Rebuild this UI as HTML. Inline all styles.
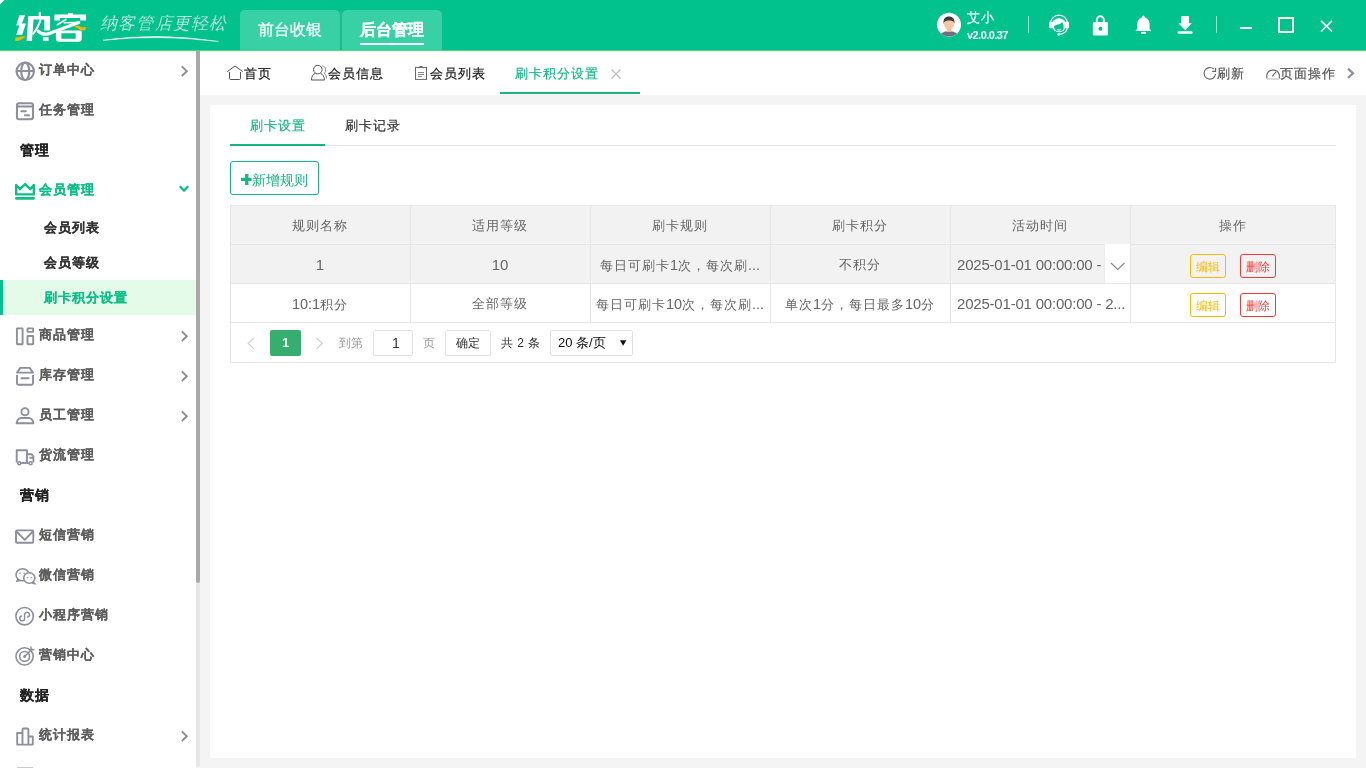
<!DOCTYPE html>
<html><head><meta charset="utf-8">
<style>
*{box-sizing:border-box;margin:0;padding:0}
.a,.mi,.sec,.sub,.tt,.th{will-change:transform}
html,body{width:1366px;height:768px;overflow:hidden;background:#f4f4f4;font-family:"Liberation Sans",sans-serif;font-size:14px;color:#333}
.a{position:absolute;white-space:nowrap}
.mi{position:absolute;left:39px;font-weight:bold;color:#5d5d5d;-webkit-text-stroke:0.1px currentColor;font-size:13px;letter-spacing:1px;line-height:20px;white-space:nowrap}
.sec{position:absolute;left:20px;font-weight:bold;color:#222;-webkit-text-stroke:0.1px currentColor;font-size:14px;letter-spacing:1px;line-height:20px}
.sub{position:absolute;left:44px;font-weight:bold;color:#333;-webkit-text-stroke:0.1px currentColor;font-size:13px;letter-spacing:1px;line-height:20px;white-space:nowrap}
.tt{position:absolute;font-size:13px;letter-spacing:1px;line-height:20px;color:#1a1a1a;-webkit-text-stroke:0.2px currentColor;white-space:nowrap}
.th{position:absolute;font-size:13px;letter-spacing:1px;line-height:20px;color:#666;white-space:nowrap;text-align:center}
.hl{position:absolute;background:#e6e6e6}
.d{font-style:normal;font-size:14.5px;letter-spacing:0}
</style></head><body>
<!-- header -->
<div class="a" style="left:0;top:0;width:1366px;height:50px;background:#01c28d"></div>
<div class="a" style="left:0;top:50px;width:1366px;height:1px;background:#47dc82"></div>
<div class="a" style="left:100px;top:11.5px;font-size:17px;line-height:24px;color:#fff;letter-spacing:1.2px;font-style:italic;-webkit-text-stroke:0.3px #01c28d">纳客管店更轻松</div>
<div class="a" style="left:240px;top:10px;width:100px;height:40px;background:#37d1a5;border-radius:5px 5px 0 0"></div>
<div class="a" style="left:342px;top:10px;width:100px;height:40px;background:#37d1a5;border-radius:5px 5px 0 0"></div>
<div class="a" style="left:340px;top:10px;width:2px;height:40px;background:#20b98a"></div>
<div class="a" style="left:258px;top:20px;font-size:16px;line-height:20px;color:#fff;-webkit-text-stroke:0.25px #fff">前台收银</div>
<div class="a" style="left:360px;top:20px;font-size:16px;line-height:20px;color:#fff;font-weight:bold;-webkit-text-stroke:0.2px #fff">后台管理</div>
<div class="a" style="left:360px;top:43px;width:64px;height:2px;background:#fff"></div>
<div class="a" style="left:967px;top:8px;font-size:13px;letter-spacing:1px;line-height:20px;color:#fff;-webkit-text-stroke:0.2px #fff">艾小</div>
<div class="a" style="left:967px;top:29px;font-size:11px;line-height:13px;color:#fff;font-weight:bold;letter-spacing:-0.55px">v2.0.0.37</div>
<div class="a" style="left:1028px;top:16px;width:1px;height:17px;background:#8fe6c8"></div>
<div class="a" style="left:1216px;top:16px;width:1px;height:17px;background:#8fe6c8"></div>

<!-- sidebar -->
<div class="a" style="left:0;top:51px;width:196px;height:717px;background:#fff"></div>
<div class="a" style="left:196px;top:51px;width:4px;height:716px;background:#e7e7e7;border-radius:0 0 2px 2px"></div>
<div class="a" style="left:196px;top:51px;width:4px;height:532px;background:#a9a9a9;border-radius:0 0 2px 2px"></div>
<div class="a" style="left:0;top:280px;width:196px;height:35px;background:#e4fbea"></div>
<div class="a" style="left:0;top:280px;width:3px;height:35px;background:#01c28d"></div>

<div class="mi" style="top:60px">订单中心</div>
<div class="mi" style="top:100px">任务管理</div>
<div class="sec" style="top:140px">管理</div>
<div class="mi" style="top:180px;color:#0bbf87">会员管理</div>
<div class="sub" style="top:218px">会员列表</div>
<div class="sub" style="top:253px">会员等级</div>
<div class="sub" style="top:288px;color:#0bbf87">刷卡积分设置</div>
<div class="mi" style="top:325px">商品管理</div>
<div class="mi" style="top:365px">库存管理</div>
<div class="mi" style="top:405px">员工管理</div>
<div class="mi" style="top:445px">货流管理</div>
<div class="sec" style="top:485px">营销</div>
<div class="mi" style="top:525px">短信营销</div>
<div class="mi" style="top:565px">微信营销</div>
<div class="mi" style="top:605px">小程序营销</div>
<div class="mi" style="top:645px">营销中心</div>
<div class="sec" style="top:685px">数据</div>
<div class="mi" style="top:725px">统计报表</div>

<!-- tab bar -->
<div class="a" style="left:200px;top:51px;width:1166px;height:44px;background:#fff"></div>
<div class="tt" style="left:244px;top:64px">首页</div>
<div class="tt" style="left:328px;top:64px">会员信息</div>
<div class="tt" style="left:430px;top:64px">会员列表</div>
<div class="tt" style="left:515px;top:64px;color:#12b985">刷卡积分设置</div>
<div class="a" style="left:500px;top:92px;width:140px;height:2px;background:#1cb47a"></div>
<div class="tt" style="left:1217px;top:64px;color:#555">刷新</div>
<div class="tt" style="left:1280px;top:64px;color:#555">页面操作</div>

<!-- card -->
<div class="a" style="left:210px;top:105px;width:1146px;height:653px;background:#fff"></div>
<div class="a" style="left:230px;top:145px;width:1106px;height:1px;background:#e6e6e6"></div>
<div class="a" style="left:230px;top:144px;width:95px;height:2px;background:#17b681"></div>
<div class="tt" style="left:250px;top:116px;color:#17b681">刷卡设置</div>
<div class="tt" style="left:345px;top:116px;color:#333">刷卡记录</div>
<div class="a" style="left:230px;top:161px;width:89px;height:34px;border:1px solid #17b681;border-radius:3px"></div>
<div class="a" style="left:252px;top:170px;font-size:14px;line-height:20px;color:#17b681">新增规则</div>

<!-- table -->
<div class="a" style="left:230px;top:205px;width:1106px;height:79px;background:#f2f2f2"></div>
<div class="hl" style="left:230px;top:205px;width:1106px;height:1px"></div>
<div class="hl" style="left:230px;top:244px;width:1106px;height:1px"></div>
<div class="hl" style="left:230px;top:283px;width:1106px;height:1px"></div>
<div class="hl" style="left:230px;top:322px;width:1106px;height:1px"></div>
<div class="hl" style="left:230px;top:362px;width:1106px;height:1px"></div>
<div class="hl" style="left:230px;top:205px;width:1px;height:158px"></div>
<div class="hl" style="left:1335px;top:205px;width:1px;height:158px"></div>
<div class="hl" style="left:410px;top:205px;width:1px;height:117px"></div>
<div class="hl" style="left:590px;top:205px;width:1px;height:117px"></div>
<div class="hl" style="left:770px;top:205px;width:1px;height:117px"></div>
<div class="hl" style="left:950px;top:205px;width:1px;height:117px"></div>
<div class="hl" style="left:1130px;top:205px;width:1px;height:117px"></div>
<div class="a" style="left:1104px;top:244px;width:26px;height:39px;background:#fff;border-left:1px solid #ececec"></div>

<div class="th" style="left:230px;width:180px;top:216px">规则名称</div>
<div class="th" style="left:410px;width:180px;top:216px">适用等级</div>
<div class="th" style="left:590px;width:180px;top:216px">刷卡规则</div>
<div class="th" style="left:770px;width:180px;top:216px">刷卡积分</div>
<div class="th" style="left:950px;width:180px;top:216px">活动时间</div>
<div class="th" style="left:1130px;width:206px;top:216px">操作</div>

<div class="th" style="left:230px;width:180px;top:255px;font-size:15px;letter-spacing:0">1</div>
<div class="th" style="left:410px;width:180px;top:255px;font-size:15px;letter-spacing:0">10</div>
<div class="th" style="left:590px;width:180px;top:255px">每日可刷卡<i class="d">1</i>次，每次刷<i class="d">...</i></div>
<div class="th" style="left:770px;width:180px;top:255px">不积分</div>
<div class="th" style="left:957px;top:255px;font-size:15px;letter-spacing:-0.2px;text-align:left">2025-01-01 00:00:00 -</div>

<div class="th" style="left:230px;width:180px;top:294px"><i class="d">10:1</i>积分</div>
<div class="th" style="left:410px;width:180px;top:294px">全部等级</div>
<div class="th" style="left:590px;width:180px;top:294px">每日可刷卡<i class="d">10</i>次，每次刷<i class="d">...</i></div>
<div class="th" style="left:770px;width:180px;top:294px">单次<i class="d">1</i>分，每日最多<i class="d">10</i>分</div>
<div class="th" style="left:957px;top:294px;font-size:15px;letter-spacing:-0.2px;text-align:left">2025-01-01 00:00:00 - 2...</div>

<div class="a" style="left:1190px;top:254px;width:36px;height:24px;border:1px solid #ffb900;border-radius:3px"></div>
<div class="a" style="left:1240px;top:254px;width:36px;height:24px;border:1px solid #f53a3a;border-radius:3px"></div>
<div class="a" style="left:1190px;top:293px;width:36px;height:24px;border:1px solid #ffb900;border-radius:3px"></div>
<div class="a" style="left:1240px;top:293px;width:36px;height:24px;border:1px solid #f53a3a;border-radius:3px"></div>
<div class="a" style="left:1196px;top:259px;font-size:12px;line-height:16px;color:#ffb900">编辑</div>
<div class="a" style="left:1246px;top:259px;font-size:12px;line-height:16px;color:#f53a3a">删除</div>
<div class="a" style="left:1196px;top:298px;font-size:12px;line-height:16px;color:#ffb900">编辑</div>
<div class="a" style="left:1246px;top:298px;font-size:12px;line-height:16px;color:#f53a3a">删除</div>

<!-- pagination -->
<div class="a" style="left:270px;top:330px;width:31px;height:26px;background:#35ae6e;border-radius:2px"></div>
<div class="a" style="left:270px;top:330px;width:31px;line-height:26px;text-align:center;color:#fff;font-size:13px;font-weight:bold">1</div>
<div class="a" style="left:339px;top:335px;font-size:12px;line-height:16px;color:#999">到第</div>
<div class="a" style="left:373px;top:330px;width:40px;height:26px;border:1px solid #e2e2e2;border-radius:2px"></div>
<div class="a" style="left:376px;top:330px;width:40px;line-height:26px;text-align:center;font-size:14px;color:#333">1</div>
<div class="a" style="left:423px;top:335px;font-size:12px;line-height:16px;color:#999">页</div>
<div class="a" style="left:445px;top:330px;width:46px;height:26px;border:1px solid #e2e2e2;border-radius:2px"></div>
<div class="a" style="left:456px;top:335px;font-size:12px;line-height:16px;color:#333">确定</div>
<div class="a" style="left:501px;top:335px;font-size:12px;line-height:16px;color:#333;word-spacing:1px">共 2 条</div>
<div class="a" style="left:550px;top:330px;width:83px;height:26px;border:1px solid #e2e2e2;border-radius:2px"></div>
<div class="a" style="left:558px;top:335px;font-size:13px;line-height:16px;color:#111">20 条/页</div>

<svg class="a" style="left:0;top:0" width="1366" height="768" viewBox="0 0 1366 768">
<defs><clipPath id="avc"><circle cx="949" cy="24.8" r="11.8"/></clipPath></defs>
<!-- avatar -->
<circle cx="949" cy="24.8" r="12" fill="#fff"/>
<g clip-path="url(#avc)">
<ellipse cx="949" cy="38" rx="10" ry="7" fill="#6e6f82"/>
<rect x="947" y="27" width="4" height="5" fill="#f0bd97"/>
<ellipse cx="949" cy="24" rx="5" ry="5.8" fill="#f4c6a2"/>
<path d="M943.5 24 C943 18 946 16.5 949 16.5 C952.5 16.5 955 18.5 954.5 24 C954 21 952.5 20.5 950 20.5 C947 20.5 944.5 20.5 943.5 24 Z" fill="#3b3b3b"/>
</g>
<!-- headset -->
<path d="M1050.5 23.6 A8.5 8.5 0 0 1 1067.5 23.6" fill="none" stroke="#fff" stroke-width="1.3"/>
<circle cx="1059" cy="25.2" r="7" fill="#fff"/>
<rect x="1049" y="21.8" width="4.6" height="6.4" rx="1.2" fill="#fff"/>
<rect x="1064.4" y="21.8" width="4.6" height="6.4" rx="1.2" fill="#fff"/>
<path d="M1053.9 25.9 C1056 24.6 1060 24.6 1062.1 22.2 C1063.6 24 1063.9 26.5 1063.6 28.4 C1063.1 30.4 1061.5 31.2 1059 31.2 C1056 31.2 1054.1 29 1053.9 25.9 Z" fill="#01c28d"/>
<path d="M1057 29.6 Q1059 30.6 1061.2 29.6" fill="none" stroke="#fff" stroke-width="1"/>
<path d="M1067.3 28.2 Q1066.3 33.6 1059.5 34.3" fill="none" stroke="#fff" stroke-width="1.2"/>
<circle cx="1058.7" cy="34.3" r="1.4" fill="#fff"/>
<!-- lock -->
<path d="M1096.8 22 V19.8 A3.5 3.5 0 0 1 1103.8 19.8 V22" fill="none" stroke="#fff" stroke-width="1.9"/>
<path fill="#fff" fill-rule="evenodd" d="M1093.8 22 H1107 A1 1 0 0 1 1108 23 V34.5 A1 1 0 0 1 1107 35.5 H1093.8 A1 1 0 0 1 1092.8 34.5 V23 A1 1 0 0 1 1093.8 22 Z M1100.4 26.8 A1.9 1.9 0 1 0 1100.41 26.8 Z"/>
<circle cx="1100.4" cy="28.7" r="1.8" fill="#01c28d"/>
<!-- bell -->
<path fill="#fff" d="M1143.4 15.4 C1144.2 15.4 1144.6 16.5 1145 17.4 C1148 18.3 1149.6 21 1149.6 24 V28.8 L1151.2 31 H1135.4 L1137.2 28.8 V24 C1137.2 21 1138.8 18.3 1141.8 17.4 C1142.2 16.5 1142.6 15.4 1143.4 15.4 Z"/>
<rect x="1141" y="31.9" width="5" height="2" fill="#fff"/>
<!-- download -->
<path fill="#fff" d="M1182.3 15.9 H1188 A1 1 0 0 1 1189 16.9 V23.3 H1191.8 L1185.1 30.3 L1178.4 23.3 H1181.3 V16.9 A1 1 0 0 1 1182.3 15.9 Z"/>
<rect x="1177.5" y="31.2" width="15.1" height="2.6" rx="1.3" fill="#fff"/>
<!-- window controls -->
<rect x="1240" y="27" width="12" height="2" fill="#fff"/>
<rect x="1279" y="18" width="14" height="14" fill="none" stroke="#fdfde0" stroke-width="2"/>
<path d="M1321 20.8 L1332 31.5 M1332 20.8 L1321 31.5" stroke="#fff" stroke-width="1.7"/>

<!-- logo slogan swoosh -->
<path d="M103 40.3 Q157 32.2 218.5 41.5 Q157 34.2 103 40.3 Z" fill="#fff" stroke="#fff" stroke-width="0.5"/>
<!-- logo yellow accents -->
<g fill="#fff">
<path d="M19.4 15.2 H25.1 L21.9 23.6 H26 L22.1 34.7 H16.2 L19.5 25.5 H16.2 Z"/>
<path d="M28.3 15.9 H33.8 L32 40.9 H26.6 Z"/>
<rect x="38.7" y="12.2" width="2.3" height="5"/>
<path d="M33 15.9 H50.1 V30.5 H44.3 V19.4 H33 Z"/>
<rect x="42.9" y="37.2" width="5.7" height="3.7"/>
<rect x="67.8" y="13" width="5" height="2.2"/>
<path d="M54.4 14.4 H86.1 V20.4 H80.2 V17.9 H59.9 V20.4 H54.4 Z"/>
<path d="M55.9 31.5 Q55.9 30.5 57 30.5 H80.6 Q81.7 30.5 81.7 31.5 V38.7 Q81.7 41.7 78.7 41.7 H58.9 Q55.9 41.7 55.9 38.7 Z M61.4 33.2 V38.7 H75.7 V33.2 Z" fill-rule="evenodd"/>
</g>
<g fill="none" stroke="#fff" stroke-linecap="round">
<path d="M40.7 19.4 Q38 28 33.3 33.7" stroke-width="2"/>
<path d="M57.4 24.8 L65.8 19.4" stroke-width="1.8"/>
<path d="M64.3 22.8 L78.7 22.4" stroke-width="1.5"/>
<path d="M38.3 31.3 Q43.5 36.5 52 32.5 L78.7 22.4" stroke-width="3.2"/>
</g>
<path d="M15.2 37.7 L24.4 36.2 L25.4 37.2 L18.9 40.7 L15.5 40.9 Z" fill="#f7b500"/>
<path d="M73.7 26.6 L77.7 25.6 L82.6 27.6 L85.9 27.1 L85.2 30.5 L80.7 30.3 L76.7 27.8 Z" fill="#f7b500"/>
<path d="M0 0 H4.5 L0 4.5 Z" fill="#fff"/>

<!-- tabbar icons -->
<g fill="none" stroke="#555" stroke-width="1" stroke-linejoin="round">
<path d="M227.3 71.6 L235 66 L242.6 71.6"/>
<path d="M229.5 72 V78.5 Q229.5 79.5 230.5 79.5 H239.5 Q240.5 79.5 240.5 78.5 V72"/>
</g>
<g fill="none" stroke="#555" stroke-width="1">
<circle cx="317.8" cy="69.6" r="4.3"/>
<path d="M315.3 73.3 C312.5 74.5 311.5 77 311.5 80 H324.5 C324.5 77 323 74.5 320.5 73.3"/>
<path d="M322.2 65.8 C326 66.5 326.8 70.5 324.3 73.5 C326 74.5 326.5 76.5 326.5 78.5" stroke="#888"/>
</g>
<g fill="none" stroke="#666" stroke-width="1">
<rect x="415.5" y="67.4" width="11" height="12"/>
<path d="M418.7 68.3 L419.8 66.5 H422.2 L423.3 68.3" />
<path d="M418 72.5 H424 M418 74.5 H424 M418 76.5 H422" stroke="#888"/>
</g>
<path d="M611.5 69.5 L620.5 78.5 M620.5 69.5 L611.5 78.5" stroke="#bbb" stroke-width="1.1"/>
<g fill="none" stroke="#666" stroke-width="1.1">
<path d="M1215.6 74 A5.8 5.8 0 1 1 1213.7 69"/>
<path d="M1212.2 71.4 H1215.6 V68"/>
</g>
<g fill="none" stroke="#666" stroke-width="1.1">
<path d="M1266.8 78.6 V75 A6.5 6.5 0 0 1 1279.4 75 V78.6"/>
<path d="M1272.5 75.8 L1275.8 72.2" stroke-linecap="round"/>
</g>
<rect x="1267" y="78.3" width="12.3" height="1.4" fill="#ccc"/>
<path d="M1348 68.6 L1353 73.3 L1348 78" fill="none" stroke="#8e8e9c" stroke-width="2.2"/>

<!-- sidebar icons -->
<g fill="none" stroke="#8e8e9c" stroke-width="2.1">
<circle cx="25.25" cy="71.35" r="8.7"/>
<ellipse cx="25.25" cy="71.35" rx="4" ry="8.7"/>
<path d="M16.6 71 H33.9"/>
<rect x="17" y="103.3" width="16" height="16" rx="2"/>
<path d="M17 106.5 H33" />
<path d="M21.3 111.3 H25.8 M25 115.3 H29" stroke-linecap="round" stroke-width="2"/>
</g>
<g fill="none" stroke="#0bbf87" stroke-width="2.4" stroke-linejoin="round">
<path d="M16.2 185 L20 189.2 L25.1 184 L30.2 189.2 L33.8 185 V194.4 H16.2 Z"/>
</g>
<rect x="15" y="197" width="20" height="2.8" rx="1.4" fill="#0bbf87"/>
<path d="M179.8 186.2 L184 190.6 L188.2 186.2" fill="none" stroke="#0bbf87" stroke-width="2.2"/>

<g fill="none" stroke="#8e8e9c" stroke-width="1.9" stroke-linejoin="round">
<rect x="16.9" y="328.4" width="5.7" height="15.9" rx="0.5"/>
<rect x="27.5" y="328.4" width="5.7" height="3.5" rx="0.5"/>
<rect x="27.5" y="336" width="5.7" height="8.3" rx="0.5"/>
<path d="M17 372.6 L20.3 367.9 H29.7 L33 372.6 Z"/>
<path d="M17 375 V383.3 Q17 384.8 18.5 384.8 H31.5 Q33 384.8 33 383.3 V375"/>
<path d="M21.5 378.3 H28.5" stroke-linecap="round" stroke-width="2"/>
<circle cx="25" cy="411.7" r="3.6"/>
<path d="M16.6 423.2 Q17.4 418 21.5 418 H28.5 Q32.6 418 33.4 423.2 Z"/>
<path d="M16.7 462.5 V450.3 H27 V462.5 M27 454.2 H31.5 L33.4 456.5 V462.5 M29.5 457.8 H33.4"/>
<path d="M21 463 H28.8" />
<circle cx="19.3" cy="463.2" r="1.5" stroke-width="1.5"/>
<circle cx="30.6" cy="463.2" r="1.5" stroke-width="1.5"/>
<rect x="16" y="530.4" width="17.3" height="12.4" rx="1"/>
<path d="M16.5 531.5 L24.7 539.8 L32.8 531.5"/>
</g>
<g fill="none" stroke="#8e8e9c" stroke-width="1.6">
<ellipse cx="22.6" cy="574.8" rx="6.6" ry="6"/><path d="M18 579 L16.8 581.3 L20.6 580.2" stroke-linejoin="round"/>
<ellipse cx="29.3" cy="578" rx="5.6" ry="5.3" fill="#fff"/>
<path d="M33.2 581.8 L34.6 583.6 L31.8 583"/>
<circle cx="24.6" cy="616.2" r="8.7"/>
<path d="M27.6 617.1 A2.4 2.4 0 1 0 24.6 614.8 V618.4 A2.4 2.4 0 1 1 21.6 616.1" stroke-linecap="round" stroke-width="1.5"/>
<circle cx="24.6" cy="656.4" r="8.6"/>
<circle cx="24.6" cy="656.4" r="4.9"/>
<path d="M24.6 656.4 L32 649 M31 647 V649.8 H33.8" stroke-linecap="round" stroke-width="1.4"/>
</g>
<g fill="#8e8e9c">
<rect x="19.2" y="572.6" width="1.6" height="1.1"/><rect x="23.4" y="572.6" width="1.6" height="1.1"/>
<rect x="26.8" y="577.2" width="1.6" height="1.1"/><rect x="30.6" y="577.2" width="1.6" height="1.1"/>
<circle cx="24.6" cy="656.4" r="1.5"/>
</g>
<g fill="none" stroke="#8e8e9c" stroke-width="1.9" stroke-linejoin="round">
<path d="M17.2 744.6 V733 H22.5 V744.6 Z M22.5 744.6 V729.5 Q22.5 728.5 23.5 728.5 H27.4 Q28.4 728.5 28.4 729.5 V744.6 Z M28.4 744.6 V736.5 H32.8 V744.6 Z"/>
</g>
<rect x="17" y="767" width="16" height="1" fill="#ccc"/>

<!-- chevrons -->
<g fill="none" stroke="#8e8e9c" stroke-width="2">
<path d="M181.8 66.4 L186.8 71.2 L181.8 76"/>
<path d="M181.8 331.4 L186.8 336.2 L181.8 341"/>
<path d="M181.8 371.4 L186.8 376.2 L181.8 381"/>
<path d="M181.8 411.4 L186.8 416.2 L181.8 421"/>
<path d="M181.8 731.4 L186.8 736.2 L181.8 741"/>
</g>

<!-- new rule plus -->
<path d="M241 179.3 H251.6 M246.8 173.9 V185" stroke="#17b681" stroke-width="3.3"/>

<!-- dropdown chevron in table -->
<path d="M1111 263 L1117.7 269.5 L1124.5 263" fill="none" stroke="#888" stroke-width="1.1"/>

<!-- pagination arrows -->
<path d="M254 338 L248.2 343.4 L254 348.8" fill="none" stroke="#ccc" stroke-width="1.1"/>
<path d="M316.5 338 L322.3 343.4 L316.5 348.8" fill="none" stroke="#ccc" stroke-width="1.1"/>
<path d="M620 340.2 H626.3 L623.15 345.8 Z" fill="#111"/>
</svg>
</body></html>
